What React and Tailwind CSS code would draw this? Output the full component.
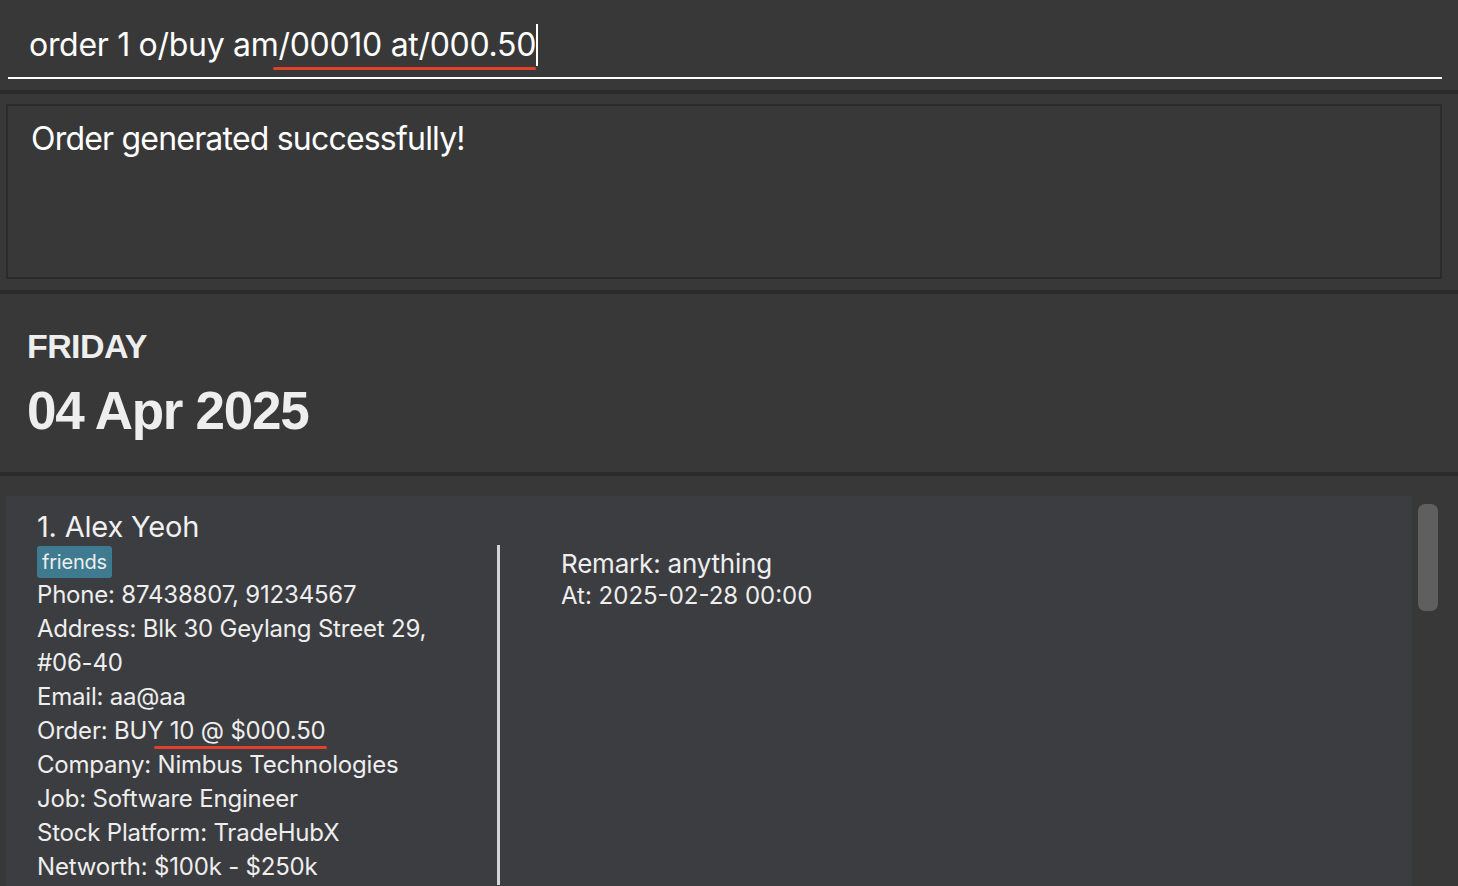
import React from 'react';

const font = { fontFamily: 'Inter, "Noto Sans", sans-serif' };

const details = [
  'Phone: 87438807, 91234567',
  'Address: Blk 30 Geylang Street 29,',
  '#06-40',
  'Email: aa@aa',
  null,
  'Company: Nimbus Technologies',
  'Job: Software Engineer',
  'Stock Platform: TradeHubX',
  'Networth: $100k - $250k',
];

function PersonCard() {
  return (
    <div className="bg-[#3c3d40] w-[1406px] h-[420px] pl-[31px] pt-[13px] flex flex-col">
      <div className="text-[29px] leading-[36px] text-[#f0f0f0] tracking-[-0.2px]">1. Alex Yeoh</div>
      <div className="flex">
        <div className="w-[460px] flex flex-col">
          <div className="pt-[1px]">
            <span className="inline-block bg-[#3e7b91] text-[#eeeeee] text-[20px] leading-[32px] px-[5px] rounded-[3px] tracking-[-0.2px]">friends</span>
          </div>
          {details.map((line, i) =>
            line === null ? (
              <div key={i} className="text-[24px] leading-[34px] text-[#eeeeee] tracking-[-0.2px]">
                Order: BUY{' '}
                <span className="relative">
                  10 @ $000.50
                  <span className="absolute left-[-16px] right-[-1px] bottom-[-4px] h-[3px] rounded-full bg-[#e0412a]" />
                </span>
              </div>
            ) : (
              <div key={i} className="text-[24px] leading-[34px] text-[#eeeeee] tracking-[-0.2px]">{line}</div>
            )
          )}
        </div>
        <div className="w-[3px] bg-[#d4d4d4] h-[340px]" />
        <div className="pl-[61px] pt-[2px] flex flex-col">
          <div className="text-[26px] leading-[33px] text-[#eeeeee] tracking-[-0.2px]">Remark: anything</div>
          <div className="text-[24px] leading-[32px] text-[#eeeeee]">At: 2025-02-28 00:00</div>
        </div>
      </div>
    </div>
  );
}

export default function App() {
  return (
    <div className="w-[1458px] h-[886px] overflow-hidden bg-[#2b2b2b] flex flex-col" style={font}>
      {/* command box */}
      <div className="h-[90px] shrink-0 bg-[#383838] pt-[22px] pl-[8px] pr-[16px]">
        <div className="h-[57px] border-b-2 border-white pl-[21px] pt-[2px] text-[32px] leading-[42px] text-white tracking-[-0.3px] flex items-start">
          <span>order 1 o/buy am</span>
          <span className="relative">
            /00010 at/000.50
            <span className="absolute left-[-5px] right-0 bottom-[-4px] h-[3px] rounded-full bg-[#e0412a]" />
          </span>
          <span className="w-[2px] h-[42px] bg-white" />
        </div>
      </div>

      {/* result display */}
      <div className="mt-[4px] h-[196px] shrink-0 bg-[#383838] pt-[10px] px-[6px]">
        <div className="w-[1436px] h-[175px] border-2 border-[#2b2b2b] pl-[23px] pt-[13px] text-[32px] leading-[40px] text-white tracking-[-0.8px]">
          Order generated successfully!
        </div>
      </div>

      {/* date panel */}
      <div className="mt-[4px] h-[178px] shrink-0 bg-[#383838] pl-[27px] pt-[32px] text-[#eeeeee] flex flex-col" style={{ fontFamily: '"Liberation Sans", Arial, sans-serif' }}>
        <div className="text-[34px] leading-[40px] font-bold tracking-[-0.6px]">FRIDAY</div>
        <div className="mt-[16px] text-[53px] leading-[58px] font-bold tracking-[-1.3px]">04 Apr 2025</div>
      </div>

      {/* list panel */}
      <div className="mt-[4px] flex-1 bg-[#383838] pt-[20px] pl-[6px] flex">
        <PersonCard />
        <div className="ml-[6px] mt-[8px] w-[20px] h-[107px] rounded-[7px] bg-[#5f5f5f]" />
      </div>
    </div>
  );
}
